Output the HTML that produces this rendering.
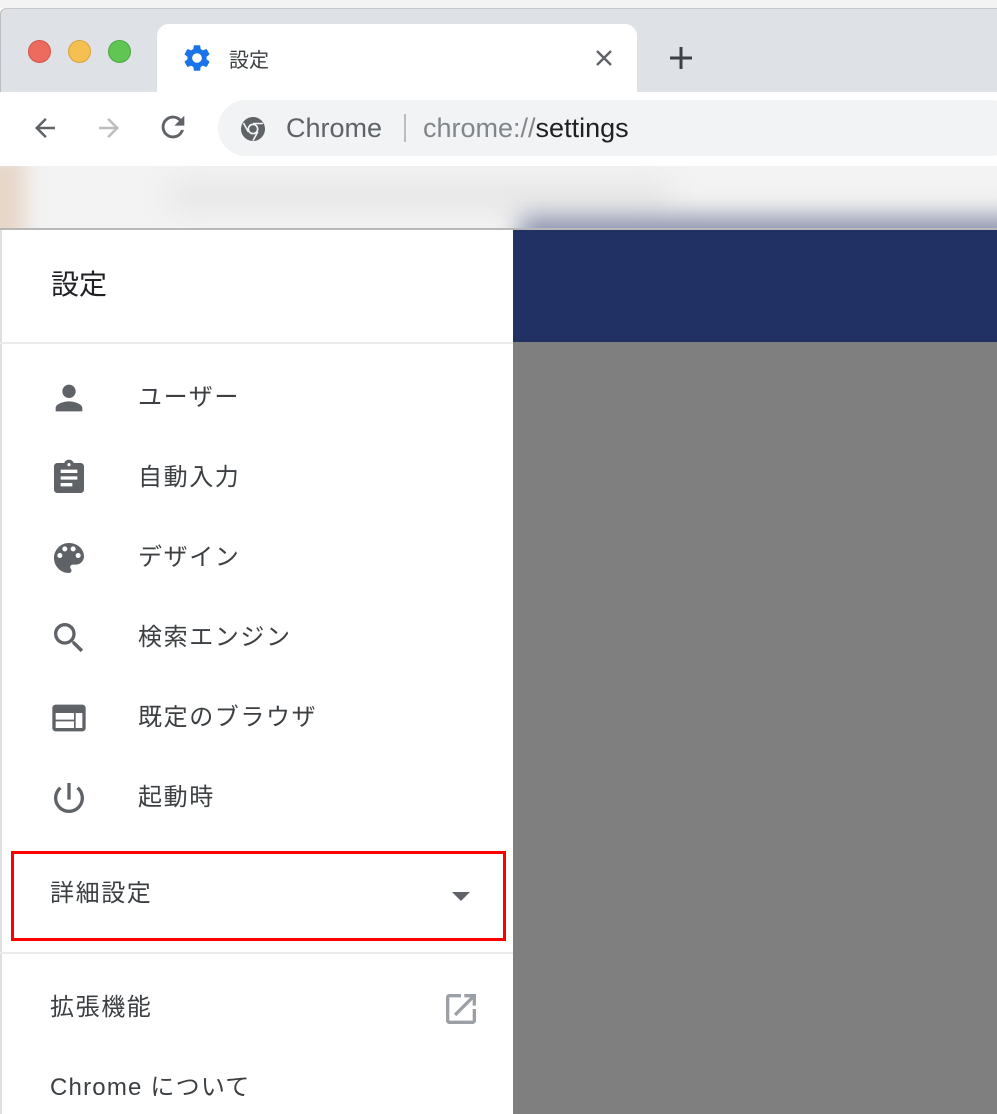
<!DOCTYPE html>
<html><head><meta charset="utf-8"><style>
*{margin:0;padding:0;box-sizing:border-box}
body{width:997px;height:1114px;overflow:hidden;background:#fff;font-family:"Liberation Sans","Noto Sans CJK JP",sans-serif;position:relative}
.a{position:absolute}
.item{position:absolute;left:0;width:513px;height:80px}
.item svg{position:absolute;left:49px;top:20px}
.item span{position:absolute;left:138px;top:0;line-height:80px;font-size:24px;color:#3c4043;letter-spacing:1.6px}
</style></head><body>
<div class="a" style="left:0;top:0;width:997px;height:8px;background:#f3f3f3"></div>
<div class="a" style="left:0;top:8px;width:997px;height:84px;background:#dee1e6;border-top:1px solid #c8c8c8;border-left:1px solid #bdbdbd;border-radius:6px 0 0 0"></div>
<div class="a" style="left:28px;top:40px;width:23px;height:23px;border-radius:50%;background:#ec6a5e;border:1px solid #d45347"></div>
<div class="a" style="left:68px;top:40px;width:23px;height:23px;border-radius:50%;background:#f5c04f;border:1px solid #d8a33a"></div>
<div class="a" style="left:108px;top:40px;width:23px;height:23px;border-radius:50%;background:#61c554;border:1px solid #4aa83d"></div>
<div class="a" style="left:157px;top:24px;width:480px;height:70px;background:#fff;border-radius:12px 12px 0 0"></div>
<svg class="a" style="left:181px;top:42px" width="32" height="32" viewBox="0 0 24 24"><path fill="#1a73e8" d="M19.14 12.94c.04-.3.06-.61.06-.94 0-.32-.02-.64-.07-.94l2.030-1.58a.49.49 0 0 0 .12-.61l-1.92-3.32a.49.49 0 0 0-.59-.22l-2.39.96c-.5-.38-1.03-.7-1.62-.94l-.36-2.54a.48.48 0 0 0-.48-.41h-3.84c-.24 0-.43.17-.47.41l-.36 2.54c-.59.24-1.13.57-1.62.94l-2.39-.96c-.22-.08-.47 0-.59.22L2.74 8.87c-.12.21-.08.47.12.61l2.03 1.58c-.05.3-.09.63-.09.94s.02.64.07.94l-2.03 1.58a.49.49 0 0 0-.12.61l1.92 3.32c.12.22.37.29.59.22l2.39-.96c.5.38 1.03.7 1.62.94l.36 2.54c.05.24.24.41.48.41h3.84c.24 0 .44-.17.47-.41l.36-2.54c.59-.24 1.13-.56 1.62-.94l2.39.96c.22.08.47 0 .59-.22l1.92-3.32c.12-.22.07-.47-.12-.61l-2.01-1.58zM12 15.6c-1.98 0-3.6-1.62-3.6-3.6s1.62-3.6 3.6-3.6 3.6 1.62 3.6 3.6-1.62 3.6-3.6 3.6z"/></svg>
<div class="a" style="left:229px;top:44px;font-size:20px;color:#3c4043">設定</div>
<svg class="a" style="left:595px;top:49px" width="18" height="18" viewBox="0 0 18 18"><path d="M2 2L16 16M16 2L2 16" stroke="#5f6368" stroke-width="2.4"/></svg>
<svg class="a" style="left:668px;top:45px" width="26" height="26" viewBox="0 0 26 26"><path d="M13 2v22M2 13h22" stroke="#3c4043" stroke-width="3"/></svg>
<div class="a" style="left:0;top:92px;width:997px;height:74px;background:#fff"></div>
<svg class="a" style="left:30px;top:113px" width="30" height="30" viewBox="0 0 24 24"><path fill="#5f6368" d="M20 11H7.830l5.59-5.59L12 4l-8 8 8 8 1.41-1.41L7.83 13H20v-2z"/></svg>
<svg class="a" style="left:94px;top:113px" width="30" height="30" viewBox="0 0 24 24"><path fill="#bdbdbd" d="M12 4l-1.41 1.41L16.17 11H4v2h12.17l-5.58 5.59L12 20l8-8z"/></svg>
<svg class="a" style="left:156px;top:110px" width="34" height="34" viewBox="0 0 24 24"><path fill="#5f6368" d="M17.65 6.35A7.958 7.958 0 0 0 12 4c-4.42 0-7.99 3.58-7.99 8s3.57 8 7.99 8c3.73 0 6.84-2.55 7.73-6h-2.08A5.99 5.99 0 0 1 12 18c-3.31 0-6-2.690-6-6s2.69-6 6-6c1.66 0 3.14.69 4.22 1.78L13 11h7V4l-2.35 2.35z"/></svg>
<div class="a" style="left:218px;top:100px;width:800px;height:56px;background:#f1f3f4;border-radius:28px"></div>
<svg class="a" style="left:240px;top:116px" width="26" height="26" viewBox="0 0 26 26"><circle cx="13" cy="13" r="12" fill="#5f6368"/><circle cx="13" cy="13" r="5.5" fill="#f1f3f4"/><circle cx="13" cy="13" r="3.8" fill="#5f6368"/><path d="M13 7.5h10M8.2 15.8L3.5 7M17.8 15.8L13 24.5" stroke="#f1f3f4" stroke-width="1.6"/></svg>
<div class="a" style="left:286px;top:110px;font-size:27px;color:#5f6368;line-height:36px">Chrome</div>
<div class="a" style="left:404px;top:114px;width:2px;height:28px;background:#bdbdbd"></div>
<div class="a" style="left:423px;top:110px;font-size:27px;color:#80868b;line-height:36px">chrome://<span style="color:#202124">settings</span></div>
<div class="a" style="left:0;top:166px;width:997px;height:62px;overflow:hidden;background:#f3f3f3">
<div class="a" style="left:-20px;top:-10px;width:45px;height:90px;background:#e6d6c8;filter:blur(10px)"></div>
<div class="a" style="left:170px;top:15px;width:500px;height:30px;background:#e6e6e6;filter:blur(14px)"></div>
<div class="a" style="left:520px;top:50px;width:500px;height:40px;background:#8d93ad;filter:blur(12px)"></div>
</div>
<div class="a" style="left:0;top:228px;width:997px;height:2px;background:#b8b8b8"></div>
<div class="a" style="left:513px;top:230px;width:484px;height:112px;background:#213163"></div>
<div class="a" style="left:513px;top:342px;width:484px;height:772px;background:#7f7f80"></div>
<div class="a" style="left:0;top:230px;width:2px;height:884px;background:#e0e0e0"></div>
<div class="a" style="left:51px;top:265px;font-size:28px;color:#202124;line-height:40px">設定</div>
<div class="a" style="left:0;top:342px;width:513px;height:2px;background:#ebebeb"></div>
<div class="item" style="top:358px"><svg width="40" height="40" viewBox="0 0 24 24"><path fill="#5f6368" d="M12 12c2.21 0 4-1.79 4-4s-1.79-4-4-4-4 1.79-4 4 1.79 4 4 4zm0 2c-2.67 0-8 1.34-8 4v2h16v-2c0-2.66-5.33-4-8-4z"/></svg><span>ユーザー</span></div>
<div class="item" style="top:438px"><svg width="40" height="40" viewBox="0 0 24 24"><path fill="#5f6368" d="M19 3h-4.18C14.4 1.84 13.3 1 12 1c-1.3 0-2.4.84-2.82 2H5c-1.1 0-2 .9-2 2v14c0 1.1.9 2 2 2h14c1.1 0 2-.9 2-2V5c0-1.1-.9-2-2-2zm-7 0c.55 0 1 .45 1 1s-.45 1-1 1-1-.45-1-1 .45-1 1-1zm2 14H7v-2h7v2zm3-4H7v-2h10v2zm0-4H7V7h10v2z"/></svg><span>自動入力</span></div>
<div class="item" style="top:518px"><svg width="40" height="40" viewBox="0 0 24 24"><path fill="#5f6368" d="M12 3c-4.97 0-9 4.030-9 9s4.03 9 9 9c.83 0 1.5-.67 1.5-1.5 0-.39-.15-.74-.39-1.01-.23-.26-.38-.61-.38-.99 0-.83.67-1.5 1.5-1.5H16c2.76 0 5-2.24 5-5 0-4.42-4.03-8-9-8zm-5.5 9c-.83 0-1.5-.67-1.5-1.5S5.67 9 6.5 9 8 9.67 8 10.5 7.33 12 6.5 12zm3-4C8.67 8 8 7.33 8 6.5S8.67 5 9.5 5s1.5.67 1.5 1.5S10.33 8 9.5 8zm5 0c-.83 0-1.5-.67-1.5-1.5S13.67 5 14.5 5s1.5.67 1.5 1.5S15.33 8 14.5 8zm3 4c-.83 0-1.5-.67-1.5-1.5S16.67 9 17.5 9s1.5.67 1.5 1.5-.67 1.5-1.5 1.5z"/></svg><span>デザイン</span></div>
<div class="item" style="top:598px"><svg width="40" height="40" viewBox="0 0 24 24"><path fill="#5f6368" d="M15.5 14h-.79l-.28-.27C15.41 12.59 16 11.11 16 9.5 16 5.91 13.09 3 9.5 3S3 5.91 3 9.5 5.91 16 9.5 16c1.61 0 3.09-.59 4.23-1.57l.27.28v.79l5 4.99L20.49 19l-4.99-5zm-6 0C7.010 14 5 11.99 5 9.5S7.01 5 9.5 5 14 7.01 14 9.5 11.99 14 9.5 14z"/></svg><span>検索エンジン</span></div>
<div class="item" style="top:678px"><svg width="40" height="40" viewBox="0 0 24 24"><path fill="#5f6368" d="M20 4H4c-1.1 0-1.99.9-1.99 2L2 18c0 1.1.9 2 2 2h16c1.1 0 2-.9 2-2V6c0-1.1-.9-2-2-2zm-5 14H4v-4h11v4zm0-5H4V9h11v4zm5 5h-4V9h4v9z"/></svg><span>既定のブラウザ</span></div>
<div class="item" style="top:758px"><svg width="40" height="40" viewBox="0 0 24 24"><path fill="#5f6368" d="M13 3h-2v10h2V3zm4.83 2.17l-1.42 1.42C17.99 7.86 19 9.81 19 12c0 3.87-3.13 7-7 7s-7-3.13-7-7c0-2.19 1.01-4.14 2.58-5.42L6.17 5.17C4.23 6.82 3 9.26 3 12c0 4.97 4.03 9 9 9s9-4.03 9-9c0-2.74-1.23-5.18-3.17-6.83z"/></svg><span>起動時</span></div>
<div class="a" style="left:11px;top:851px;width:495px;height:90px;border:3px solid #fe0000"></div>
<div class="a" style="left:50px;top:876px;font-size:24px;color:#3c4043;line-height:36px;letter-spacing:1.6px">詳細設定</div>
<div class="a" style="left:452px;top:892px;width:0;height:0;border-left:9px solid transparent;border-right:9px solid transparent;border-top:9px solid #5f6368"></div>
<div class="a" style="left:0;top:952px;width:513px;height:2px;background:#ebebeb"></div>
<div class="a" style="left:50px;top:990px;font-size:24px;color:#3c4043;line-height:36px;letter-spacing:1.6px">拡張機能</div>
<svg class="a" style="left:441px;top:989px" width="40" height="40" viewBox="0 0 24 24"><path fill="#9aa0a6" d="M19 19H5V5h7V3H5c-1.11 0-2 .9-2 2v14c0 1.1.89 2 2 2h14c1.1 0 2-.9 2-2v-7h-2v7zM14 3v2h3.59l-9.83 9.83 1.41 1.41L19 6.41V10h2V3h-7z"/></svg>
<div class="a" style="left:50px;top:1070px;font-size:24px;color:#3c4043;line-height:36px;letter-spacing:1.2px">Chrome について</div>
</body></html>
